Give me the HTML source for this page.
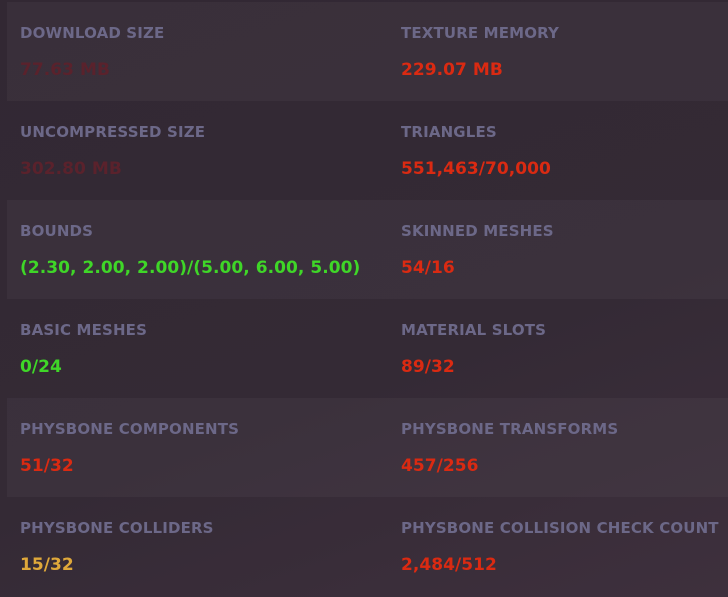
<!DOCTYPE html>
<html><head><style>
html,body{margin:0;padding:0}
body{width:728px;height:597px;overflow:hidden;background:linear-gradient(160deg,#322833 0%,#342a35 60%,#3e303d 100%);font-family:"DejaVu Sans","Liberation Sans",sans-serif;font-weight:bold;position:relative}
.band{position:absolute;left:7px;right:0;height:99px;background:rgba(255,255,255,0.035)}
.l{position:absolute;font-size:15px;color:#6c6888;line-height:1;letter-spacing:0.15px;white-space:nowrap}
.v{position:absolute;font-size:17px;line-height:1;letter-spacing:0.05px;white-space:nowrap}
.r{color:#da2a12}.g{color:#3fd628}.y{color:#dfa83a}.dr{color:#5a222c}
</style></head><body>
<div class="band" style="top:2px"></div>
<div class="band" style="top:200px"></div>
<div class="band" style="top:398px"></div>

<div class="l" style="left:20px;top:26px">DOWNLOAD SIZE</div>
<div class="v dr" style="left:20px;top:62px">77.63 MB</div>
<div class="l" style="left:401px;top:26px">TEXTURE MEMORY</div>
<div class="v r" style="left:401px;top:62px">229.07 MB</div>

<div class="l" style="left:20px;top:125px">UNCOMPRESSED SIZE</div>
<div class="v dr" style="left:20px;top:161px">302.80 MB</div>
<div class="l" style="left:401px;top:125px">TRIANGLES</div>
<div class="v r" style="left:401px;top:161px">551,463/70,000</div>

<div class="l" style="left:20px;top:224px">BOUNDS</div>
<div class="v g" style="left:20px;top:260px">(2.30, 2.00, 2.00)/(5.00, 6.00, 5.00)</div>
<div class="l" style="left:401px;top:224px">SKINNED MESHES</div>
<div class="v r" style="left:401px;top:260px">54/16</div>

<div class="l" style="left:20px;top:323px">BASIC MESHES</div>
<div class="v g" style="left:20px;top:359px">0/24</div>
<div class="l" style="left:401px;top:323px">MATERIAL SLOTS</div>
<div class="v r" style="left:401px;top:359px">89/32</div>

<div class="l" style="left:20px;top:422px">PHYSBONE COMPONENTS</div>
<div class="v r" style="left:20px;top:458px">51/32</div>
<div class="l" style="left:401px;top:422px">PHYSBONE TRANSFORMS</div>
<div class="v r" style="left:401px;top:458px">457/256</div>

<div class="l" style="left:20px;top:521px">PHYSBONE COLLIDERS</div>
<div class="v y" style="left:20px;top:557px">15/32</div>
<div class="l" style="left:401px;top:521px">PHYSBONE COLLISION CHECK COUNT</div>
<div class="v r" style="left:401px;top:557px">2,484/512</div>
</body></html>
